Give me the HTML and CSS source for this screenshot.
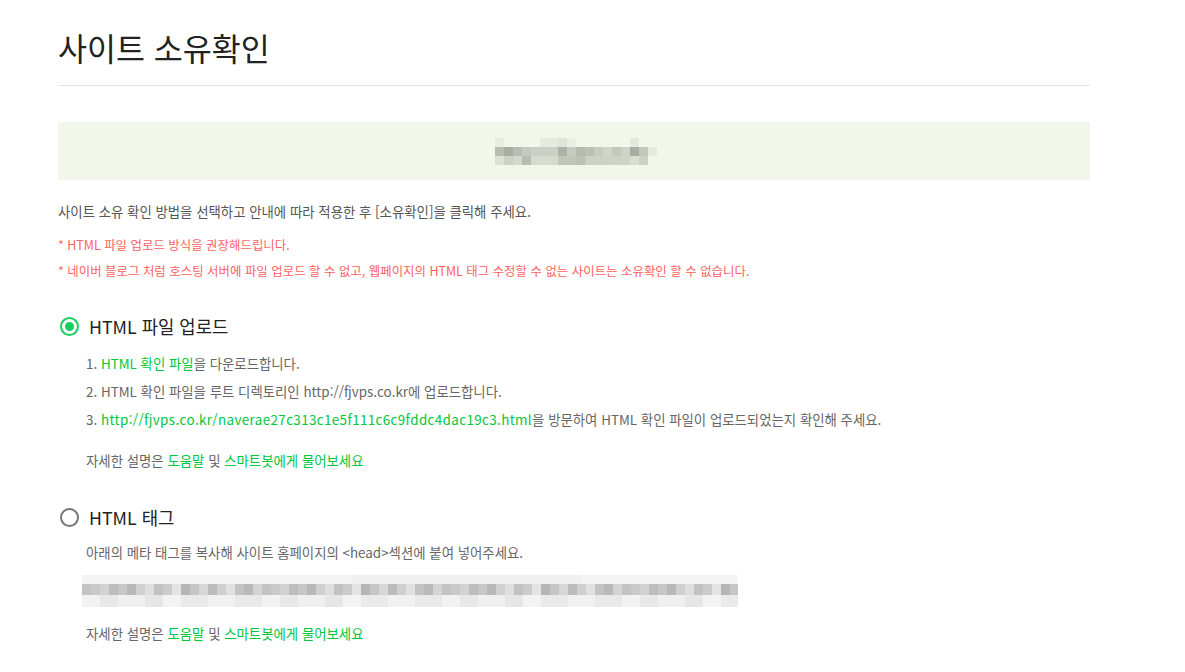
FILE: index.html
```html
<!DOCTYPE html>
<html lang="ko">
<head>
<meta charset="utf-8">
<title>사이트 소유확인</title>
<link rel="stylesheet" href="styles.css">
</head>
<body>
<div class="page">
  <header class="head">
    <h1 class="title">사이트 소유확인</h1>
  </header>

  <div class="site-box">
    <div class="mosaic-site">
      <div class="ms-row ms-r1"></div>
      <div class="ms-row ms-r2"></div>
      <div class="ms-row ms-r3"></div>
    </div>
  </div>

  <p class="intro">사이트 소유 확인 방법을 선택하고 안내에 따라 적용한 후 [소유확인]을 클릭해 주세요.</p>

  <ul class="notes">
    <li>* HTML 파일 업로드 방식을 권장해드립니다.</li>
    <li>* 네이버 블로그 처럼 호스팅 서버에 파일 업로드 할 수 없고, 웹페이지의 HTML 태그 수정할 수 없는 사이트는 소유확인 할 수 없습니다.</li>
  </ul>

  <section class="method">
    <label class="radio-row">
      <span class="radio radio-on"></span>
      <span class="radio-label">HTML 파일 업로드</span>
    </label>
    <ol class="steps">
      <li>1. <a class="lnk" href="#">HTML 확인 파일</a>을 다운로드합니다.</li>
      <li>2. HTML 확인 파일을 루트 디렉토리인 http://fjvps.co.kr에 업로드합니다.</li>
      <li>3. <a class="lnk url" href="#">http://fjvps.co.kr/naverae27c313c1e5f111c6c9fddc4dac19c3.html</a>을 방문하여 HTML 확인 파일이 업로드되었는지 확인해 주세요.</li>
    </ol>
    <p class="help help-1">자세한 설명은 <a class="lnk" href="#">도움말</a> 및 <a class="lnk" href="#">스마트봇에게 물어보세요</a></p>
  </section>

  <section class="method method-2">
    <label class="radio-row">
      <span class="radio"></span>
      <span class="radio-label">HTML 태그</span>
    </label>
    <p class="desc">아래의 메타 태그를 복사해 사이트 홈페이지의 &lt;head&gt;섹션에 붙여 넣어주세요.</p>
    <div class="mosaic-meta">
      <div class="mm-row mm-r1"></div>
      <div class="mm-row mm-r2"></div>
      <div class="mm-row mm-r3"></div>
    </div>
    <p class="help help-2">자세한 설명은 <a class="lnk" href="#">도움말</a> 및 <a class="lnk" href="#">스마트봇에게 물어보세요</a></p>
  </section>
</div>
</body>
</html>
```

FILE: styles.css
```css
* { box-sizing: border-box; }
html, body { margin: 0; padding: 0; background: #fff; }
body {
  font-family: "Noto Sans CJK KR", "Noto Sans", sans-serif;
  color: #666;
}
.page {
  width: 1032px;
  margin-left: 58px;
  padding-top: 27px;
}
.head {
  border-bottom: 1px solid #e2e2e2;
  padding-bottom: 18px;
}
.title {
  margin: 0;
  font-size: 31.5px;
  line-height: 40px;
  font-weight: 400;
  color: #222;
}
.site-box {
  margin-top: 36px;
  height: 58px;
  background: #f1f7ea;
  display: flex;
  align-items: center;
  justify-content: center;
}
.mosaic-site {
  width: 162px;
  margin-left: 4px;
  display: flex;
  flex-direction: column;
}
.ms-row { height: 9px; }
.ms-r1 {
  background: linear-gradient(to right,
    #e8ede2 0 9px, transparent 9px 45px, #e6ebe0 45px 63px, #dfe5d9 63px 72px,
    #eaefe4 72px 81px, transparent 81px 135px, #e4e9de 135px 144px, transparent 144px);
}
.ms-r2 {
  background: linear-gradient(to right,
    #b8bdb2 0 9px, #a9aea4 9px 18px, #b8bdb2 18px 27px, #c5cac0 27px 36px,
    #cbd0c5 36px 63px, #adb2a8 63px 72px, #c6cbc0 72px 81px, #b6bbb0 81px 90px,
    #bcc1b6 90px 99px, #c8cdc2 99px 108px, #d1d6cb 108px 117px, #c4c9be 117px 126px,
    #cfd4c9 126px 135px, #a8ada3 135px 144px, #c3c8bd 144px 153px, #e6ebe0 153px 162px);
}
.ms-r3 {
  background: linear-gradient(to right,
    #dce1d6 0 9px, #cdd2c7 9px 18px, #d4d9ce 18px 27px, #b8bdb2 27px 36px,
    #d6dbd0 36px 63px, #c1c6bb 63px 81px, #bcc1b6 81px 90px, #cdd2c7 90px 117px,
    #cfd4c9 117px 135px, #d9ded3 135px 144px, #cdd2c7 144px 153px, transparent 153px);
}
.intro {
  margin: 21px 0 0;
  font-size: 13.4px;
  line-height: 20px;
  color: #555;
}
.notes {
  list-style: none;
  margin: 11px 0 0;
  padding: 0;
  font-size: 12.45px;
  line-height: 26px;
  color: #ff5f5f;
}
.method { margin-top: 30px; }
.method-2 { margin-top: 35px; }
.radio-row {
  display: flex;
  align-items: center;
  gap: 10px;
  height: 24px;
  padding-left: 2px;
}
.radio {
  width: 19px;
  height: 19px;
  border-radius: 50%;
  border: 2px solid #777;
  display: flex;
  align-items: center;
  justify-content: center;
  background: #fff;
  flex: none;
}
.radio-on { border-color: #19ce60; }
.radio-on::after {
  content: "";
  width: 9px;
  height: 9px;
  border-radius: 50%;
  background: #19ce60;
}
.radio-label {
  font-size: 17.8px;
  line-height: 24px;
  color: #222;
}
.steps {
  list-style: none;
  margin: 11px 0 0;
  padding: 0 0 0 28px;
  font-size: 13.4px;
  line-height: 28px;
  color: #666;
}
.lnk { color: #00c73c; text-decoration: none; }
.url { letter-spacing: 0.38px; }
.help {
  margin: 0;
  padding-left: 28px;
  font-size: 13.4px;
  line-height: 20px;
  color: #666;
}
.help-1 { margin-top: 17px; }
.desc {
  margin: 13px 0 0;
  padding-left: 28px;
  font-size: 13.4px;
  line-height: 20px;
  color: #666;
}
.mosaic-meta {
  margin: 13px 0 0 24px;
  width: 656px;
  display: flex;
  flex-direction: column;
}
.mm-row { width: 100%; }
.mm-r1 {
  height: 9px;
  background:
    linear-gradient(to right, #f3f3f3 0 270px, #f0f0f0 270px 500px, #f4f4f4 500px);
}
.mm-r2 {
  height: 11px;
  background-color: #c8c8c8;
  background-image: linear-gradient(to right,
    #c4c4c4 0 9px, #c9c9c9 9px 18px, #d2d2d2 18px 27px, #bdbdbd 27px 36px,
    #c7c7c7 36px 45px, #b8b8b8 45px 54px, #d0d0d0 54px 63px, #dedede 63px 72px,
    #c2c2c2 72px 81px, #cbcbcb 81px 90px, #e4e4e4 90px 99px, #b6b6b6 99px 108px,
    #c6c6c6 108px 117px, #d7d7d7 117px 126px, #bbbbbb 126px 135px, #cfcfcf 135px 144px,
    #e0e0e0 144px 153px, #c3c3c3 153px 162px, #b9b9b9 162px 171px, #d4d4d4 171px 180px);
  background-size: 180px 11px;
}
.mm-r3 {
  height: 12px;
  background-color: #efefef;
  background-image: linear-gradient(to right,
    #f2f2f2 0 18px, #e8e8e8 18px 36px, #f0f0f0 36px 63px, #e6e6e6 63px 81px,
    #f3f3f3 81px 99px, #eaeaea 99px 126px, #f1f1f1 126px 153px, #e9e9e9 153px 180px);
  background-size: 180px 12px;
}
.help-2 { margin-top: 16px; }
```
